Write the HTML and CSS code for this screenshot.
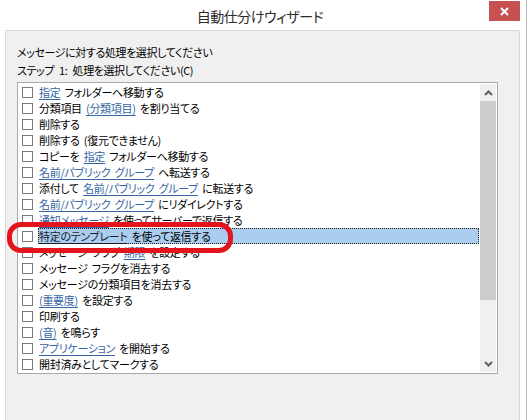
FILE: index.html
```html
<!DOCTYPE html>
<html lang="ja">
<head>
<meta charset="utf-8">
<link rel="stylesheet" href="styles.css">
</head>
<body>
<div class="window">
  <div class="titlebar">
    <div class="title">自動仕分けウィザード</div>
    <div class="close">
      <svg width="9" height="9" viewBox="0 0 9 9"><path d="M1 1 L8 8 M8 1 L1 8" stroke="#fff" stroke-width="2" fill="none"/></svg>
    </div>
  </div>
  <div class="panel">
    <div class="line">メッセージに対する処理を選択してください</div>
    <div class="line step">ステップ 1: 処理を選択してください(C)</div>
    <div class="listbox">
      <div class="rows">
        <div class="row"><span class="cb"></span><span class="label"><span class="link">指定</span> フォルダーへ移動する</span></div>
        <div class="row"><span class="cb"></span><span class="label">分類項目 <span class="link">(分類項目)</span> を割り当てる</span></div>
        <div class="row"><span class="cb"></span><span class="label">削除する</span></div>
        <div class="row"><span class="cb"></span><span class="label">削除する (復元できません)</span></div>
        <div class="row"><span class="cb"></span><span class="label">コピーを <span class="link">指定</span> フォルダーへ移動する</span></div>
        <div class="row"><span class="cb"></span><span class="label"><span class="link">名前/パブリック グループ</span> へ転送する</span></div>
        <div class="row"><span class="cb"></span><span class="label">添付して <span class="link">名前/パブリック グループ</span> に転送する</span></div>
        <div class="row"><span class="cb"></span><span class="label"><span class="link">名前/パブリック グループ</span> にリダイレクトする</span></div>
        <div class="row"><span class="cb"></span><span class="label"><span class="link">通知メッセージ</span> を使ってサーバーで返信する</span></div>
        <div class="row"><span class="cb"></span><span class="label selected"><span class="link sel">特定のテンプレート</span> を使って返信する</span></div>
        <div class="row"><span class="cb"></span><span class="label">メッセージ フラグ <span class="link">期限</span> を設定する</span></div>
        <div class="row"><span class="cb"></span><span class="label">メッセージ フラグを消去する</span></div>
        <div class="row"><span class="cb"></span><span class="label">メッセージの分類項目を消去する</span></div>
        <div class="row"><span class="cb"></span><span class="label"><span class="link">(重要度)</span> を設定する</span></div>
        <div class="row"><span class="cb"></span><span class="label">印刷する</span></div>
        <div class="row"><span class="cb"></span><span class="label"><span class="link">(音)</span> を鳴らす</span></div>
        <div class="row"><span class="cb"></span><span class="label"><span class="link">アプリケーション</span> を開始する</span></div>
        <div class="row"><span class="cb"></span><span class="label">開封済みとしてマークする</span></div>
      </div>
      <div class="scrollbar">
        <div class="sbtn">
          <svg width="9" height="6" viewBox="0 0 9 6"><path d="M1 5 L4.5 1.5 L8 5" stroke="#606060" stroke-width="2" fill="none"/></svg>
        </div>
        <div class="thumb"></div>
        <div class="track"></div>
        <div class="sbtn">
          <svg width="9" height="6" viewBox="0 0 9 6"><path d="M1 1 L4.5 4.5 L8 1" stroke="#606060" stroke-width="2" fill="none"/></svg>
        </div>
      </div>
    </div>
  </div>
</div>
<div class="annotation"></div>
</body>
</html>
```

FILE: styles.css
```css
html, body {
  margin: 0;
  padding: 0;
}
body {
  width: 528px;
  height: 420px;
  overflow: hidden;
  background: #ffffff;
  font-family: "Noto Sans CJK JP", "Noto Sans", sans-serif;
  font-feature-settings: "palt";
  color: #000;
  position: relative;
}
.window {
  width: 526px;
  height: 420px;
  border-right: 1px solid #bdbdbd;
  background: #ffffff;
}
.titlebar {
  position: relative;
  height: 30px;
  padding-right: 6px;
  display: flex;
  justify-content: center;
  align-items: center;
}
.title {
  font-size: 14px;
  letter-spacing: -0.5px;
  line-height: 20px;
  padding-top: 2px;
  color: #2b2b2b;
}
.close {
  position: absolute;
  left: 489px;
  top: 1px;
  width: 31px;
  height: 20px;
  background: #c75050;
  display: flex;
  align-items: center;
  justify-content: center;
}
.panel {
  margin-left: 5px;
  width: 515px;
  height: 400px;
  box-sizing: border-box;
  border: 1px solid #d9d9d9;
  background: #f0f0f0;
  padding: 12px 0 0 11px;
}
.line {
  font-size: 11px;
  letter-spacing: -0.4px;
  line-height: 18px;
  color: #000;
}
.line.step {
  word-spacing: 3px;
}
.listbox {
  margin-top: 3px;
  width: 481px;
  height: 292px;
  box-sizing: border-box;
  border: 1px solid #a9a9a9;
  background: #fff;
  display: flex;
}
.rows {
  flex: 1;
  padding-top: 1px;
}
.row {
  height: 16px;
  display: flex;
  align-items: center;
}
.cb {
  width: 11px;
  height: 11px;
  box-sizing: border-box;
  border: 1px solid #7a7a7a;
  background: #fff;
  margin-left: 4px;
}
.label {
  flex: 1;
  height: 16px;
  margin-left: 5px;
  margin-right: 1px;
  padding-left: 1px;
  box-sizing: border-box;
  font-size: 11px;
  letter-spacing: -0.3px;
  word-spacing: 2px;
  line-height: 16px;
  white-space: nowrap;
  color: #000;
}
.label.selected {
  background: #aacdf0;
  outline: 1px dotted #202020;
  outline-offset: -1px;
}
.link {
  color: #3465a4;
  text-decoration: underline;
  text-underline-offset: 2px;
}
.link.sel {
  color: #1a1a2a;
}
.scrollbar {
  width: 16px;
  margin: 1px 1px 1px 0;
  background: #f0f0f0;
  display: flex;
  flex-direction: column;
}
.sbtn {
  height: 17px;
  display: flex;
  align-items: center;
  justify-content: center;
}
.thumb {
  height: 199px;
  background: #cdcdcd;
}
.track {
  flex: 1;
}
.annotation {
  position: absolute;
  left: 7px;
  top: 222px;
  width: 226px;
  height: 31px;
  box-sizing: border-box;
  border: 5px solid #e3141b;
  border-radius: 14px;
}
```
